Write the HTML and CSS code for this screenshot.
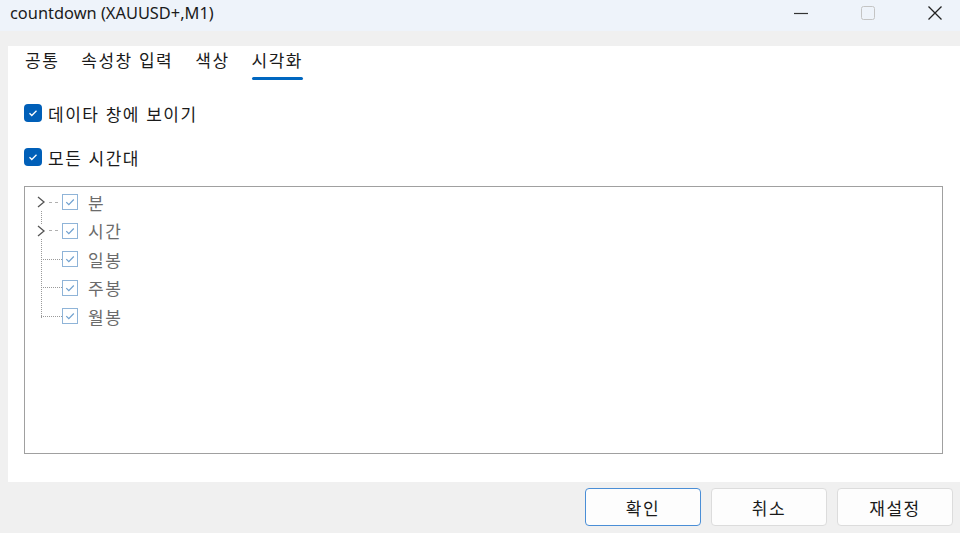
FILE: index.html
```html
<!DOCTYPE html>
<html lang="ko">
<head>
<meta charset="utf-8">
<link rel="stylesheet" href="styles.css">
</head>
<body>
<div class="window">
  <div class="titlebar">
    <span class="title">countdown (XAUUSD+,M1)</span>
    <div class="controls">
      <span class="ctl"><svg width="16" height="16" viewBox="0 0 16 16"><path d="M1 8.5h14" stroke="#333" stroke-width="1.2"/></svg></span>
      <span class="ctl"><svg width="16" height="16" viewBox="0 0 16 16"><rect x="1.5" y="1.5" width="13" height="13" rx="2" fill="none" stroke="#c4c4c4" stroke-width="1"/></svg></span>
      <span class="ctl"><svg width="16" height="16" viewBox="0 0 16 16"><path d="M1.5 1.5l13 13M14.5 1.5l-13 13" stroke="#222" stroke-width="1.3"/></svg></span>
    </div>
  </div>
  <div class="panel">
    <div class="tabs">
      <span class="tab">공통</span>
      <span class="tab">속성창 입력</span>
      <span class="tab">색상</span>
      <span class="tab active">시각화</span>
    </div>
    <label class="check-row">
      <span class="cb"><svg width="12" height="12" viewBox="0 0 12 12"><path d="M2.5 6.2l2.3 2.3 4.7-4.7" fill="none" stroke="#fff" stroke-width="1.3"/></svg></span>
      <span>데이타 창에 보이기</span>
    </label>
    <label class="check-row second">
      <span class="cb"><svg width="12" height="12" viewBox="0 0 12 12"><path d="M2.5 6.2l2.3 2.3 4.7-4.7" fill="none" stroke="#fff" stroke-width="1.3"/></svg></span>
      <span>모든 시간대</span>
    </label>
    <div class="tree">
      <div class="trunk"></div>
      <div class="node">
        <span class="exp"><svg width="10" height="14" viewBox="0 0 10 14"><path d="M2 2l6 5-6 5" fill="none" stroke="#555" stroke-width="1.3"/></svg></span>
        <span class="dash"></span>
        <span class="tcb"><svg width="12" height="12" viewBox="0 0 12 12"><path d="M2.3 6.2l2.5 2.5 5-5.2" fill="none" stroke="#6fa0cf" stroke-width="1.2"/></svg></span>
        <span class="tlabel">분</span>
      </div>
      <div class="node">
        <span class="exp"><svg width="10" height="14" viewBox="0 0 10 14"><path d="M2 2l6 5-6 5" fill="none" stroke="#555" stroke-width="1.3"/></svg></span>
        <span class="dash"></span>
        <span class="tcb"><svg width="12" height="12" viewBox="0 0 12 12"><path d="M2.3 6.2l2.5 2.5 5-5.2" fill="none" stroke="#6fa0cf" stroke-width="1.2"/></svg></span>
        <span class="tlabel">시간</span>
      </div>
      <div class="node leaf">
        <span class="lexp"></span>
        <span class="dots"></span>
        <span class="tcb"><svg width="12" height="12" viewBox="0 0 12 12"><path d="M2.3 6.2l2.5 2.5 5-5.2" fill="none" stroke="#6fa0cf" stroke-width="1.2"/></svg></span>
        <span class="tlabel">일봉</span>
      </div>
      <div class="node leaf">
        <span class="lexp"></span>
        <span class="dots"></span>
        <span class="tcb"><svg width="12" height="12" viewBox="0 0 12 12"><path d="M2.3 6.2l2.5 2.5 5-5.2" fill="none" stroke="#6fa0cf" stroke-width="1.2"/></svg></span>
        <span class="tlabel">주봉</span>
      </div>
      <div class="node leaf">
        <span class="lexp"></span>
        <span class="dots"></span>
        <span class="tcb"><svg width="12" height="12" viewBox="0 0 12 12"><path d="M2.3 6.2l2.5 2.5 5-5.2" fill="none" stroke="#6fa0cf" stroke-width="1.2"/></svg></span>
        <span class="tlabel">월봉</span>
      </div>
    </div>
  </div>
  <div class="footer">
    <button class="btn primary">확인</button>
    <button class="btn">취소</button>
    <button class="btn">재설정</button>
  </div>
</div>
</body>
</html>
```

FILE: styles.css
```css
* { box-sizing: border-box; }
html, body { margin: 0; padding: 0; }
body {
  width: 960px;
  height: 533px;
  overflow: hidden;
  background: #f0f0f0;
  font-family: "Noto Sans", "Noto Sans CJK KR", sans-serif;
  color: #1a1a1a;
}
.window { display: flex; flex-direction: column; height: 533px; }
.titlebar {
  height: 31px;
  background: #eef3fa;
  display: flex;
  align-items: flex-start;
  padding-left: 10px;
}
.title { font-size: 16.4px; line-height: 26px; color: #1b1b1b; flex: 1; }
.controls { display: flex; height: 31px; align-items: flex-start; margin-right: -8px; }
.ctl {
  width: 67px;
  height: 26px;
  display: flex;
  align-items: center;
  justify-content: center;
}
.ctl svg { display: block; }
.panel {
  margin: 15px 0 0 8px;
  height: 436px;
  background: #fff;
  padding: 0 16px 0 16px;
  display: flex;
  flex-direction: column;
}
.tabs, .check-row, .tree, .btn {
  font-family: "Noto Sans CJK KR", sans-serif;
  font-size: 17px;
  letter-spacing: 1.5px;
}
.tabs {
  display: flex;
  gap: 22px;
  padding-left: 1px;
  height: 35px;
  align-items: flex-start;
  color: #1a1a1a;
}
.tab { line-height: 28px; position: relative; height: 35px; }
.tab.active::after {
  content: "";
  position: absolute;
  left: 0; right: 0;
  top: 31px;
  height: 3px;
  border-radius: 2px;
  background: #0067c0;
}
.check-row {
  display: flex;
  align-items: center;
  gap: 6px;
  margin-top: 23px;
  height: 18px;
  color: #1a1a1a;
}
.check-row.second { margin-top: 26px; }
.cb {
  width: 18px; height: 18px;
  border-radius: 4px;
  background: #005fb8;
  display: flex; align-items: center; justify-content: center;
}
.cb svg { display: block; }
.tree {
  position: relative;
  margin-top: 20px;
  height: 268px;
  width: 919px;
  border: 1px solid #a0a0a0;
  padding: 1px 0 0 11px;
  color: #6b6b6b;
}
.trunk {
  position: absolute;
  left: 16px;
  top: 24px;
  height: 107px;
  border-left: 1px dotted #9a9a9a;
}
.node {
  display: flex;
  align-items: center;
  height: 28.5px;
}
.exp { width: 10px; height: 14px; display: flex; align-items: center; background: #fff; position: relative; }
.exp svg { display: block; }
.dash { width: 9px; margin: 0 4px 0 3px; border-top: 1px dashed #b0b0b0; height: 0; }
.lexp { width: 5px; }
.dots { width: 21px; border-top: 1px dotted #9a9a9a; height: 0; }
.tcb {
  width: 16px; height: 16px;
  border: 1px solid #8fb4d8;
  background: #fff;
  display: flex; align-items: center; justify-content: center;
}
.tcb svg { display: block; }
.tlabel { margin-left: 10px; }
.footer {
  flex: 1;
  display: flex;
  justify-content: flex-end;
  gap: 10px;
  padding: 6px 7px 0 0;
}
.btn {
  width: 116px;
  height: 38px;
  background: #fdfdfd;
  border: 1px solid #dcdcdc;
  border-radius: 4px;
  color: #1a1a1a;
  padding: 0;
}
.btn.primary { border: 1px solid #4a8ed6; }
```
